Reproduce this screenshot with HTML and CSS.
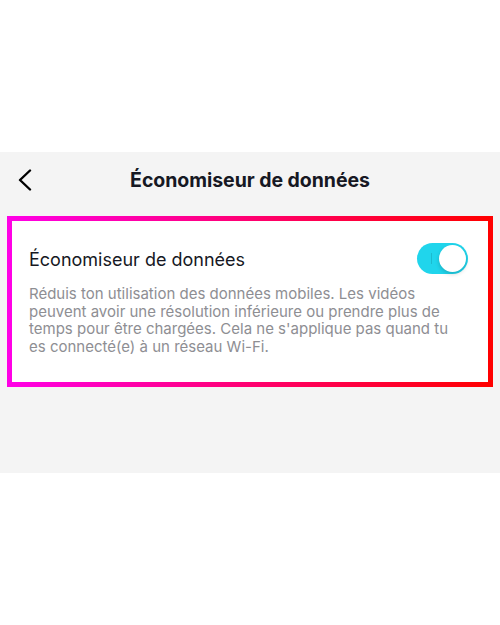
FILE: index.html
```html
<!DOCTYPE html>
<html lang="fr">
<head>
<meta charset="utf-8">
<link rel="stylesheet" href="styles.css">
</head>
<body>
<div class="top-space"></div>
<div class="screen">
  <header class="nav">
    <button class="back" aria-label="Retour">
      <svg width="14" height="22" viewBox="0 0 14 22"><polyline points="12,1.5 2,11 12,20.5" fill="none" stroke="#000" stroke-width="2.4" stroke-linecap="round" stroke-linejoin="round"/></svg>
    </button>
    <h1 class="nav-title">Économiseur de données</h1>
  </header>
  <section class="card">
    <div class="row">
      <span class="row-title">Économiseur de données</span>
      <span class="toggle"><span class="toggle-mark"></span><span class="knob"></span></span>
    </div>
    <p class="desc">Réduis ton utilisation des données mobiles. Les vidéos peuvent avoir une résolution inférieure ou prendre plus de temps pour être chargées. Cela ne s'applique pas quand tu es connecté(e) à un réseau Wi-Fi.</p>
  </section>
</div>
</body>
</html>
```
FILE: styles.css
```css
html, body {
  margin: 0;
  padding: 0;
  background: #ffffff;
  font-family: "Inter", "Liberation Sans", Arial, sans-serif;
}
.top-space {
  height: 152px;
}
.screen {
  background: #f4f4f4;
  height: 321px;
  display: flex;
  flex-direction: column;
}
.nav {
  height: 64px;
  box-sizing: border-box;
  padding-bottom: 8px;
  display: flex;
  align-items: center;
  justify-content: center;
  position: relative;
}
.back {
  position: absolute;
  left: 18px;
  top: 17px;
  border: 0;
  background: none;
  padding: 0;
  width: 14px;
  height: 22px;
  display: flex;
}
.nav-title {
  margin: 0;
  font-size: 19.5px;
  font-weight: 700;
  color: #161823;
  letter-spacing: -0.05px;
}
.card {
  margin: 0 7px;
  border: 5px solid #ff0080;
  border-image: linear-gradient(to right, #ff00e6, #ff0070 50%, #ff0000) 1;
  background: #ffffff;
  padding: 22px 20px 25px 17px;
  box-sizing: border-box;
  height: 171px;
}
.row {
  display: flex;
  align-items: center;
  justify-content: space-between;
  height: 31px;
}
.row-title {
  font-size: 18px;
  color: #161823;
  padding-top: 2px;
}
.toggle {
  width: 51px;
  height: 31px;
  border-radius: 16px;
  background: #20d5ec;
  position: relative;
  display: block;
}
.toggle-mark {
  position: absolute;
  left: 14px;
  top: 10px;
  width: 1px;
  height: 11px;
  background: rgba(0,0,0,0.12);
}
.knob {
  position: absolute;
  right: 2px;
  top: 2px;
  width: 27px;
  height: 27px;
  border-radius: 50%;
  background: #ffffff;
  box-shadow: 0 2px 4px rgba(0,0,0,0.18);
}
.desc {
  margin: 11px 0 0;
  font-size: 15px;
  line-height: 17.5px;
  color: #8e8e93;
}
```
